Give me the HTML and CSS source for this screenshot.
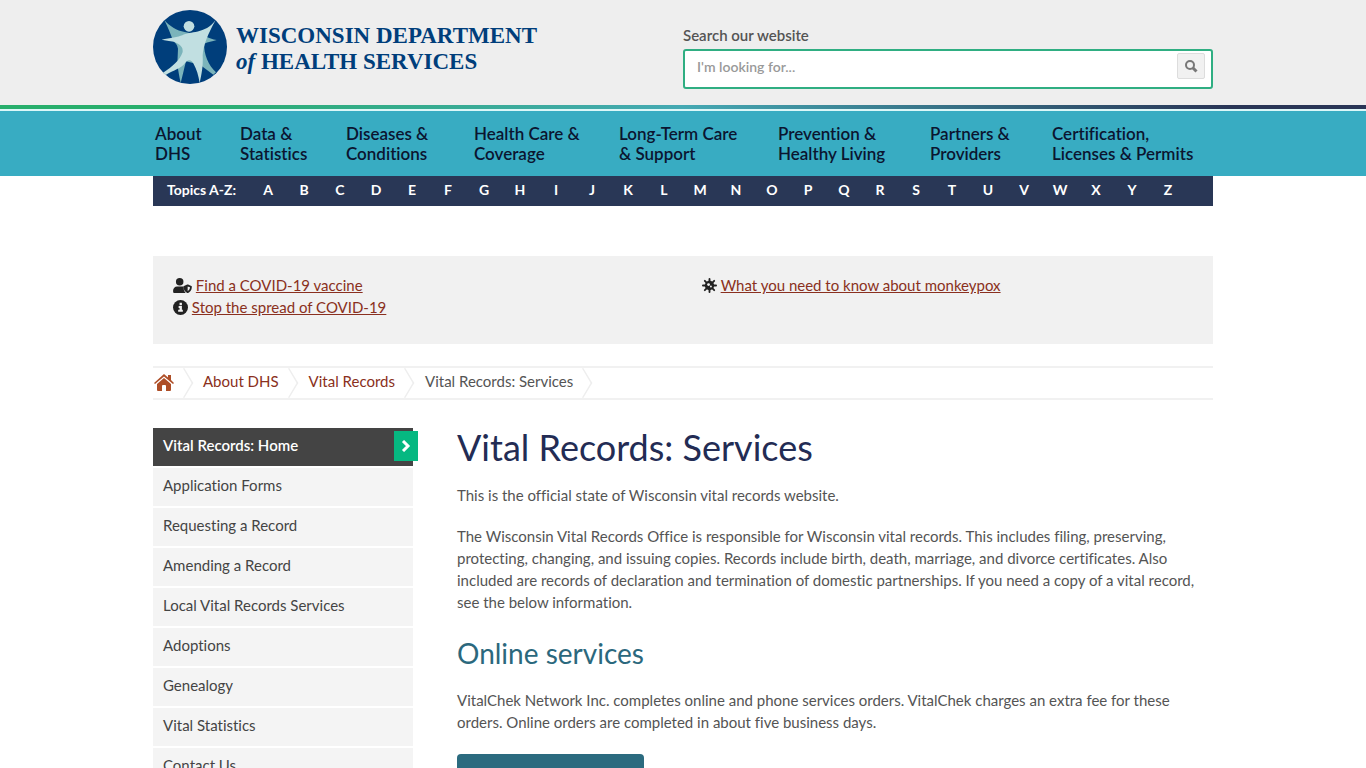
FILE: index.html
```html
<!DOCTYPE html>
<html lang="en">

<head>
    <meta charset="UTF-8">
    <meta name="viewport" content="width=device-width, initial-scale=1.0">
    <title>Vital Records: Services | Wisconsin Department of Health Services</title>
    <link rel="stylesheet" href="styles.css">
</head>

<body>
    <header class="site-header">
        <div class="container header-row">
            <a class="logo" href="#">
                <svg class="logo-mark" viewBox="9 14 222 222" aria-hidden="true">
                    <circle cx="120" cy="125" r="111" fill="#003e7b" />
                    <!-- figure behind -->
                    <path d="M43 44C58 62 80 76 104 80L150 90L166 92C176 99 188 102 200 104C186 108 174 110 163 115C160 145 176 180 198 201L190 208C176 198 164 188 150 178L108 168C102 190 98 212 92 233C88 214 84 194 82 176L84 130C82 118 76 112 70 108C62 86 54 66 43 44Z" fill="#7bb4bb" />
                    <!-- figure in front -->
                    <path d="M197 44C174 85 160 120 158 150C160 185 154 210 149 233C145 210 140 192 131 176C126 162 112 161 106 172C96 188 70 194 47 209L39 202C66 185 90 165 98 140C100 124 90 117 72 109C58 107 45 105 35 103C60 99 85 95 97 90C120 76 165 88 197 44Z" fill="#c1dfe1" />
                    <circle cx="117" cy="63" r="16" fill="#c1dfe1" />
                </svg>
                <span class="logo-text">WISCONSIN DEPARTMENT<br><i>of</i> HEALTH SERVICES</span>
            </a>
            <form class="search">
                <label for="search">Search our website</label>
                <div class="search-box">
                    <input type="text" id="search" placeholder="I'm looking for...">
                    <button type="button" aria-label="Search">
                        <svg width="14" height="14" viewBox="0 0 14 14" fill="none" stroke="#777">
                            <circle cx="6" cy="6" r="4" stroke-width="2" />
                            <path d="M9 9L12.500 12.500" stroke-width="3" />
                        </svg>
                    </button>
                </div>
            </form>
        </div>
    </header>

    <nav class="main-nav">
        <ul class="container">
            <li><a href="#">About<br>DHS</a></li>
            <li><a href="#">Data &amp;<br>Statistics</a></li>
            <li><a href="#">Diseases &amp;<br>Conditions</a></li>
            <li><a href="#">Health Care &amp;<br>Coverage</a></li>
            <li><a href="#">Long-Term Care<br>&amp; Support</a></li>
            <li><a href="#">Prevention &amp;<br>Healthy Living</a></li>
            <li><a href="#">Partners &amp;<br>Providers</a></li>
            <li><a href="#">Certification,<br>Licenses &amp; Permits</a></li>
        </ul>
    </nav>

    <div class="container">
        <nav class="topics">
            <span>Topics A-Z:</span>
            <a href="#">A</a>
            <a href="#">B</a>
            <a href="#">C</a>
            <a href="#">D</a>
            <a href="#">E</a>
            <a href="#">F</a>
            <a href="#">G</a>
            <a href="#">H</a>
            <a href="#">I</a>
            <a href="#">J</a>
            <a href="#">K</a>
            <a href="#">L</a>
            <a href="#">M</a>
            <a href="#">N</a>
            <a href="#">O</a>
            <a href="#">P</a>
            <a href="#">Q</a>
            <a href="#">R</a>
            <a href="#">S</a>
            <a href="#">T</a>
            <a href="#">U</a>
            <a href="#">V</a>
            <a href="#">W</a>
            <a href="#">X</a>
            <a href="#">Y</a>
            <a href="#">Z</a>
        </nav>

        <!-- Health alerts -->
        <section class="alerts">
            <ul>
                <li>
                    <svg width="19" height="15" viewBox="0 0 640 512" aria-hidden="true">
                        <path d="M224 256a128 128 0 1 0 0-256 128 128 0 0 0 0 256zM134 288h180c14 0 32 4 46 10v40c0 70 25 130 70 174H45c-25 0-45-20-45-45v-45C0 348 60 288 134 288z" />
                        <path fill-rule="evenodd" d="M622 271 510 226q-14-5-28 0L370 271c-11 5-18 15-18 27 0 112 65 183 130 210q14 6 28 0c52-21 130-86 130-210 0-12-7-22-18-27zM496 446V286l80 33c-5 70-45 110-80 127z" />
                    </svg>
                    <a href="#">Find a COVID-19 vaccine</a>
                </li>
                <li>
                    <svg width="15" height="15" viewBox="0 0 16 16" aria-hidden="true">
                        <circle cx="8" cy="8" r="8" />
                        <path d="M7 3h2.500v2.500H7zM6 6.500h3.500v4h1v2H5.500v-2H7V8.500H6z" fill="#f1f1f1" />
                    </svg>
                    <a href="#">Stop the spread of COVID-19</a>
                </li>
            </ul>
            <ul>
                <li>
                    <svg width="15" height="15" viewBox="0 0 16 16" aria-hidden="true">
                        <g stroke="#222" stroke-width="2" stroke-linecap="round">
                            <path d="M8 1v14M1 8h14M3 3l10 10M13 3L3 13" />
                        </g>
                        <circle cx="8" cy="8" r="5" />
                        <circle cx="7" cy="7" r="1.500" fill="#f1f1f1" />
                        <circle cx="9.500" cy="9" r="1" fill="#f1f1f1" />
                    </svg>
                    <a href="#">What you need to know about monkeypox</a>
                </li>
            </ul>
        </section>

        <nav class="breadcrumb">
            <a href="#" class="crumb home" aria-label="Home">
                <svg width="20" height="17" viewBox="0 0 20 17" fill="#ae4e27" aria-hidden="true">
                    <path d="M10 0L14 3.500V1H17V6L20 9L19 10L10 2.500L1 10L0 9Z" />
                    <path d="M10 4L17 10V16Q17 17 16 17H12V12Q12 11 11 11H9Q8 11 8 12V17H4Q3 17 3 16V10Z" />
                </svg>
            </a>
            <a href="#" class="crumb">About DHS</a>
            <a href="#" class="crumb">Vital Records</a>
            <span class="crumb">Vital Records: Services</span>
        </nav>

        <div class="columns">
            <aside class="side-menu">
                <ul>
                    <li class="active">
                        <a href="#">Vital Records: Home</a>
                        <span class="arrow">
                            <svg width="10" height="12" viewBox="0 0 10 12" fill="none" stroke="#fff" stroke-width="3" aria-hidden="true">
                                <path d="M2 1L7 6L2 11" />
                            </svg>
                        </span>
                    </li>
                    <li><a href="#">Application Forms</a></li>
                    <li><a href="#">Requesting a Record</a></li>
                    <li><a href="#">Amending a Record</a></li>
                    <li><a href="#">Local Vital Records Services</a></li>
                    <li><a href="#">Adoptions</a></li>
                    <li><a href="#">Genealogy</a></li>
                    <li><a href="#">Vital Statistics</a></li>
                    <li><a href="#">Contact Us</a></li>
                </ul>
            </aside>

            <main class="content">
                <h1>Vital Records: Services</h1>
                <p>This is the official state of Wisconsin vital records website.</p>
                <p>The Wisconsin Vital Records Office is responsible for Wisconsin vital records. This includes filing, preserving, protecting, changing, and issuing copies. Records include birth, death, marriage, and divorce certificates. Also included are records of declaration and termination of domestic partnerships. If you need a copy of a vital record, see the below information.</p>
                <h2>Online services</h2>
                <p>VitalChek Network Inc. completes online and phone services orders. VitalChek charges an extra fee for these orders. Online orders are completed in about five business days.</p>
                <button type="button" class="order" aria-label="Order online"></button>
            </main>
        </div>
    </div>
</body>

</html>
```
FILE: styles.css
```css
* {
    box-sizing: border-box;
}

html {
    scrollbar-width: none;
}

body {
    margin: 0;
    background: #fff;
    color: #545454;
    font-family: Lato, sans-serif;
    font-size: 15px;
    font-variant-ligatures: none;
    line-height: 22px;
}

ul {
    list-style: none;
    margin: 0;
    padding: 0;
}

a {
    color: #8a3020;
}

.container {
    max-width: 1060px;
    margin: 0 auto;
}

/* Header */
.site-header {
    background: #eee;
}

.header-row {
    display: flex;
    justify-content: space-between;
    height: 105px;
}

.logo {
    display: flex;
    gap: 9px;
    padding-top: 10px;
    text-decoration: none;
}

.logo-mark {
    width: 74px;
    height: 74px;
}

.logo-text {
    padding-top: 13px;
    color: #003e7b;
    font-family: "Liberation Serif", serif;
    font-size: 23px;
    font-weight: bold;
    line-height: 26px;
    white-space: nowrap;
}

.search {
    width: 50%;
    padding-top: 24px;
}

.search label {
    display: block;
    height: 25px;
    font-weight: 600;
}

.search-box {
    display: flex;
    height: 40px;
    padding: 2px 6px;
    background: #fff;
    border: 2px solid #2fae82;
    border-radius: 3px;
}

.search-box input {
    flex: 1;
    height: 26px;
    padding: 0 6px;
    border: 0;
    outline: 0;
    background: none;
    font-family: inherit;
    font-size: 14px;
}

.search-box input::placeholder {
    color: #999;
    font-weight: 600;
}

.search-box button {
    display: flex;
    align-items: center;
    justify-content: center;
    width: 28px;
    height: 26px;
    padding: 0;
    background: #f1f1f1;
    border: 1px solid #ddd;
    border-radius: 2px;
}

/* Main navigation */
.main-nav {
    background: #38acc2;
}

.main-nav::before {
    content: "";
    display: block;
    height: 4px;
    background: linear-gradient(to right, #27ae6b 12%, #45a9b3 50%, #293556 90%) border-box;
    border-bottom: 2px solid #dcf7f8;
}

.main-nav ul {
    display: grid;
    grid-template-columns: 85fr 106fr 128fr 145fr 159fr 152fr 122fr 161fr;
    padding: 13px 0 12px 2px;
    line-height: 20px;
}

.main-nav a {
    color: #0b1530;
    font-size: 17px;
    font-weight: 600;
    text-decoration: none;
    white-space: nowrap;
}

.topics {
    display: flex;
    height: 30px;
    padding-left: 14px;
    background: #293756;
    color: #fff;
    font-size: 14px;
    font-weight: bold;
    line-height: 28px;
}

.topics span {
    width: 83px;
}

.topics a {
    width: 36px;
    color: #fff;
    text-align: center;
    text-decoration: none;
}

/* Alerts */
.alerts {
    display: grid;
    grid-template-columns: 1fr 1fr;
    margin-top: 50px;
    padding: 18px 20px 26px;
    background: #f1f1f1;
}

.alerts ul + ul {
    padding-left: 19px;
}

.alerts svg {
    fill: #222;
    vertical-align: -2px;
}

/* Breadcrumb */
.breadcrumb {
    display: flex;
    height: 34px;
    margin-top: 22px;
    border-top: 2px solid #f1f1f1;
    border-bottom: 2px solid #f1f1f1;
    line-height: 27px;
}

.crumb {
    position: relative;
    margin-right: 30px;
    text-decoration: none;
}

.crumb.home {
    padding: 6px 0 0 1px;
    line-height: 0;
    margin-right: 29px;
}

/* chevron between crumbs */
.crumb::after {
    content: "";
    position: absolute;
    top: 4px;
    right: -21px;
    width: 20px;
    height: 20px;
    border-top: 2px solid #eee;
    border-right: 2px solid #eee;
    transform: scaleX(0.6) rotate(45deg);
}

/* Columns */
.columns {
    display: grid;
    grid-template-columns: 260px 1fr;
    column-gap: 44px;
    margin-top: 28px;
}

.side-menu li {
    position: relative;
    margin-bottom: 2px;
    background: #f4f4f4;
}

.side-menu a {
    display: block;
    padding: 6px 10px 10px;
    color: #444;
    text-decoration: none;
}

.side-menu .active {
    background: #444;
}

.side-menu .active a {
    color: #fff;
    font-weight: 600;
}

.arrow {
    position: absolute;
    top: 3px;
    right: -5px;
    display: flex;
    align-items: center;
    justify-content: center;
    width: 24px;
    height: 30px;
    background: #06b881;
}

.content h1 {
    margin: 0 0 18px;
    color: #232c54;
    font-size: 36px;
    font-weight: normal;
    line-height: 38px;
}

.content p {
    margin: 0 0 19px;
}

.content h2 {
    margin: 20px 0 16px;
    color: #2b687d;
    font-size: 28px;
    font-weight: normal;
    line-height: 40px;
}

.order {
    display: block;
    width: 187px;
    height: 42px;
    margin-top: 21px;
    background: #2b6b7f;
    border: 0;
    border-radius: 4px;
}
```
